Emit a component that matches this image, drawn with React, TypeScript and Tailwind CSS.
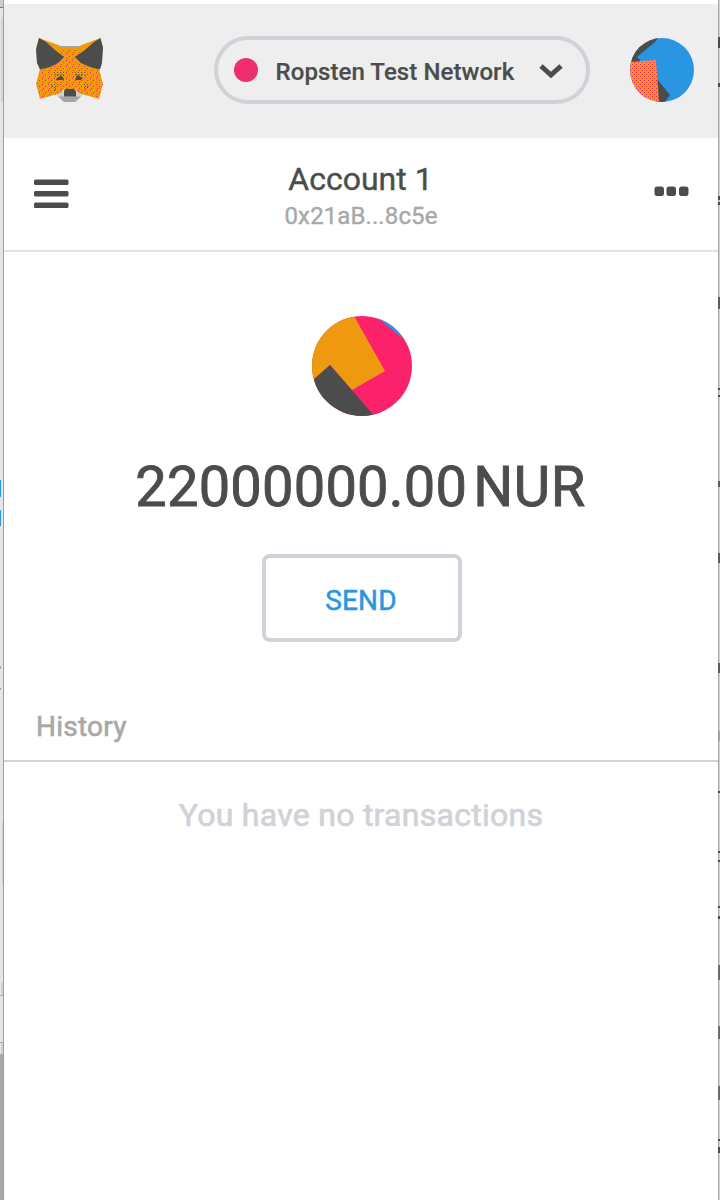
import React from "react";

type Mark = { top: number; height: number; tone: string };

const leftMarks: Mark[] = [
  { top: 480, height: 17, tone: "w-px bg-[#2996e2]" },
  { top: 510, height: 16, tone: "w-px bg-[#2996e2]" },
  { top: 666, height: 3, tone: "w-px bg-[#a0a0a0]" },
  { top: 688, height: 2, tone: "w-px bg-[#a0a0a0]" },
  { top: 995, height: 1, tone: "w-[3px] bg-[#aaaaaa]" },
  { top: 1042, height: 1, tone: "w-[3px] bg-[#aaaaaa]" },
];

const rightMarks: Mark[] = [
  { top: 37, height: 11, tone: "bg-[#4a4d4c]" },
  { top: 83, height: 4, tone: "bg-[#4a4d4c]" },
  { top: 196, height: 4, tone: "bg-[#4a4d4c]" },
  { top: 202, height: 3, tone: "bg-[#4a4d4c]" },
  { top: 297, height: 12, tone: "bg-[#5a5d5c]" },
  { top: 388, height: 2, tone: "bg-[#4a4d4c]" },
  { top: 395, height: 2, tone: "bg-[#4a4d4c]" },
  { top: 481, height: 6, tone: "bg-[#5a5d5c]" },
  { top: 553, height: 10, tone: "bg-[#5a5d5c]" },
  { top: 663, height: 10, tone: "bg-[#5a5d5c]" },
  { top: 731, height: 10, tone: "bg-[#a0a0a0]" },
  { top: 791, height: 2, tone: "bg-[#4a4d4c]" },
  { top: 851, height: 2, tone: "bg-[#4a4d4c]" },
  { top: 860, height: 2, tone: "bg-[#4a4d4c]" },
  { top: 906, height: 2, tone: "bg-[#4a4d4c]" },
  { top: 916, height: 3, tone: "bg-[#4a4d4c]" },
  { top: 965, height: 15, tone: "bg-[#6a6d6c]" },
  { top: 1026, height: 13, tone: "bg-[#6a6d6c]" },
  { top: 1086, height: 14, tone: "bg-[#6a6d6c]" },
  { top: 1139, height: 2, tone: "bg-[#4a4d4c]" },
  { top: 1147, height: 6, tone: "bg-[#4a4d4c]" },
];

function Fox() {
  return (
    <svg width="68" height="64" viewBox="36 38 68 64" className="block">
      <defs>
        <pattern id="foxDots" width="6" height="6" patternUnits="userSpaceOnUse">
          <rect width="1" height="1" fill="#f8216c" />
          <rect x="3" y="2" width="1" height="1" fill="#f8216c" />
          <rect x="1" y="4" width="1" height="1" fill="#f8216c" />
        </pattern>
        <pattern id="foxShade" width="3" height="3" patternUnits="userSpaceOnUse">
          <rect width="1" height="1" fill="#4a4d4c" />
          <rect x="1" y="2" width="1" height="1" fill="#4a4d4c" />
        </pattern>
      </defs>
      <path d="M39 38L61 46H79L100.500 38L103 48L99 69L103 84L99 99L78 93L75 89H64L61 93L40 99L36 84L40 69L36 48Z" fill="#f0990f" />
      <path d="M51 61L62 50H77L89 61L98 69L103 84L99 98L76 92L75 89H64L62 93L40 98L37 84L41 70Z" fill="url(#foxDots)" />
      <path d="M59 46.500H80" stroke="#a5a5a5" />
      <path d="M39 38L46 42L55 50L64 57L58 63L50 67L40 69.500L37 63L36 50Z" fill="#4a4d4c" />
      <path d="M100.500 38L94 42L85 50L75 57L81 63L90 67L100 69.500L102 63L103 48Z" fill="#4a4d4c" />
      <path d="M52 72H64V76H55ZM75 72H88L84 76H76ZM49 84H58L55 92ZM82 84H90L86 91Z" fill="url(#foxShade)" opacity=".9" />
      <path d="M56 79L60 76L63 77L64 80H56ZM75 80L77 75L83 78L81 80Z" fill="#4a4d4c" />
      <path d="M56 94.500L63 92H76L83 94.500L76 101.700H64Z" fill="#cfcfcf" />
      <path d="M58 96.500H81L75 101.900H64Z" fill="#a5a5a5" />
      <path d="M65 89H74L76 91V96.500H64V91Z" fill="#4a4d4c" />
    </svg>
  );
}

function HeaderIdenticon() {
  return (
    <svg width="64" height="64" viewBox="630 38 64 64" className="block">
      <defs>
        <clipPath id="headerCircle"><circle cx="662" cy="70" r="32" /></clipPath>
        <pattern id="orangeDots" width="4" height="4" patternUnits="userSpaceOnUse">
          <rect width="4" height="4" fill="#f0990f" />
          <rect width="1" height="1" fill="#f8216c" />
          <rect x="2" y="2" width="1" height="1" fill="#f8216c" />
        </pattern>
      </defs>
      <g clipPath="url(#headerCircle)">
        <rect x="630" y="38" width="64" height="64" fill="#2996e2" />
        <path d="M630 38H658L655 42L637 57L640 60V62H630Z" fill="#4a4d4c" />
        <path d="M657 79L670 95L665 102H657Z" fill="#4a4d4c" />
        <path d="M630 62L656 60L659 102H630Z" fill="url(#orangeDots)" />
      </g>
    </svg>
  );
}

function AccountIdenticon() {
  return (
    <svg width="100" height="100" viewBox="312 316 100 100" className="block">
      <defs><clipPath id="accountCircle"><circle cx="362" cy="366" r="50" /></clipPath></defs>
      <g clipPath="url(#accountCircle)">
        <rect x="312" y="316" width="100" height="100" fill="#fb226b" />
        <path d="M312 316H354L385 371L352 390L330 365L312 381Z" fill="#ee990f" />
        <path d="M330 365L377 419H312V381Z" fill="#4a4d4c" />
        <path d="M375 316L405 340H412V316Z" fill="#2996e2" />
      </g>
    </svg>
  );
}

export default function App() {
  return (
    <div className="flex h-[1200px] w-[720px] overflow-hidden bg-white font-['Roboto',sans-serif] text-[#4a4d4c]">
      <aside className="relative flex w-1 shrink-0 flex-col border-r border-[#9e9ea2] bg-[#e6e6e8]">
        <div className="h-[7px] bg-[#c9ccd2]" />
        <div className="h-px bg-[#77797a]" />
        <div className="h-[9px]" />
        <div className="ml-px h-[85px] bg-[#d2d4d9]" />
        <div className="h-[720px]" />
        <div className="ml-[2px] h-[64px] bg-[#cfd3d9]" />
        <div className="h-[96px]" />
        <div className="ml-px h-[13px] bg-[#d0d2d5]" />
        <div className="h-[48px]" />
        <div className="ml-px h-[11px] bg-[#d0d2d5]" />
        <div className="flex-1 bg-[#a9a9a9]" />
        {leftMarks.map((m) => (
          <i key={m.top} className={`absolute left-0 ${m.tone}`} style={{ top: m.top, height: m.height }} />
        ))}
      </aside>

      <main className="flex w-[714px] shrink-0 flex-col bg-white pt-1">
        <header className="flex h-[134px] shrink-0 items-center bg-[#eeeeee] pr-[24px] pb-[2px] pl-8">
          <Fox />
          <button className="ml-[110px] flex h-[68px] w-[376px] items-center rounded-full border-4 border-[#cfd2d8] pr-[23px] pl-4">
            <span className="size-6 shrink-0 rounded-full bg-[#ee2e70]" />
            <span className="ml-[17.500px] whitespace-nowrap pt-[3px] text-[24px] leading-7 font-medium tracking-[0.08px] [-webkit-text-stroke:0.2px]">Ropsten Test Network</span>
            <svg width="24" height="16" viewBox="0 0 24 16" className="ml-auto block">
              <path d="M2 4L12 13L22 4" fill="none" stroke="#4a4d4c" strokeWidth="5" />
            </svg>
          </button>
          <div className="ml-auto"><HeaderIdenticon /></div>
        </header>

        <section className="flex h-[114px] shrink-0 justify-between border-b-2 border-[#e2e3e4] pr-[29px] pl-[30px]">
          <svg width="35" height="30" viewBox="0 0 35 30" className="mt-[41px] block" fill="#4a4d4c">
            <rect y="0.500" width="34.500" height="5.500" rx="1.500" />
            <rect y="12" width="34.500" height="5.500" rx="1.500" />
            <rect y="23.500" width="34.500" height="5.500" rx="1.500" />
          </svg>
          <div className="mr-px flex flex-col items-center pt-[22px]">
            <h1 className="mr-px text-[32px] leading-[38px] [-webkit-text-stroke:0.4px]">Account 1</h1>
            <p className="text-[24px] leading-[36px] tracking-[0.1px] text-[#a8a8a8] [-webkit-text-stroke:0.4px]">0x21aB...8c5e</p>
          </div>
          <svg width="35" height="10" viewBox="0 0 35 10" className="mt-[48px] block" fill="#4a4d4c">
            <rect x="0.500" y="0.500" width="9.500" height="9.500" rx="2.800" />
            <rect x="12.500" y="0.500" width="9.500" height="9.500" rx="2.800" />
            <rect x="25" y="0.500" width="9.500" height="9.500" rx="2.800" />
          </svg>
        </section>

        <section className="flex h-[510px] shrink-0 flex-col items-center border-b-2 border-[#cfd2d8] pt-16">
          <div className="ml-[2px]"><AccountIdenticon /></div>
          <div className="mt-[38px] flex h-[66px] items-center gap-[6px] pr-px text-[56px] leading-[66px] tracking-[0.22px] whitespace-nowrap [-webkit-text-stroke:0.9px]">
            <span>22000000.00</span>
            <span className="tracking-[0.6px]">NUR</span>
          </div>
          <button className="mt-[34px] ml-[2px] flex h-[88px] w-[200px] items-center justify-center rounded-lg border-4 border-[#cfd2d8] pt-[5px] pr-[2px] text-[28px] tracking-[0.15px] text-[#2996e2] [-webkit-text-stroke:0.5px]">
            SEND
          </button>
          <h2 className="mt-[68px] w-full pl-8 text-[28px] leading-[34px] tracking-[0.25px] text-[#a8a8a8] [-webkit-text-stroke:0.6px]">History</h2>
        </section>

        <p className="mt-[34px] text-center text-[32px] leading-[38px] tracking-[0.27px] text-[#cfd2d8] [-webkit-text-stroke:0.7px]">You have no transactions</p>
      </main>

      <aside className="relative w-[2px] shrink-0 border-l border-[#a8a8aa] bg-[#d2d2d4]">
        {rightMarks.map((m) => (
          <i key={m.top} className={`absolute -left-px w-[2px] ${m.tone}`} style={{ top: m.top, height: m.height }} />
        ))}
      </aside>
    </div>
  );
}
